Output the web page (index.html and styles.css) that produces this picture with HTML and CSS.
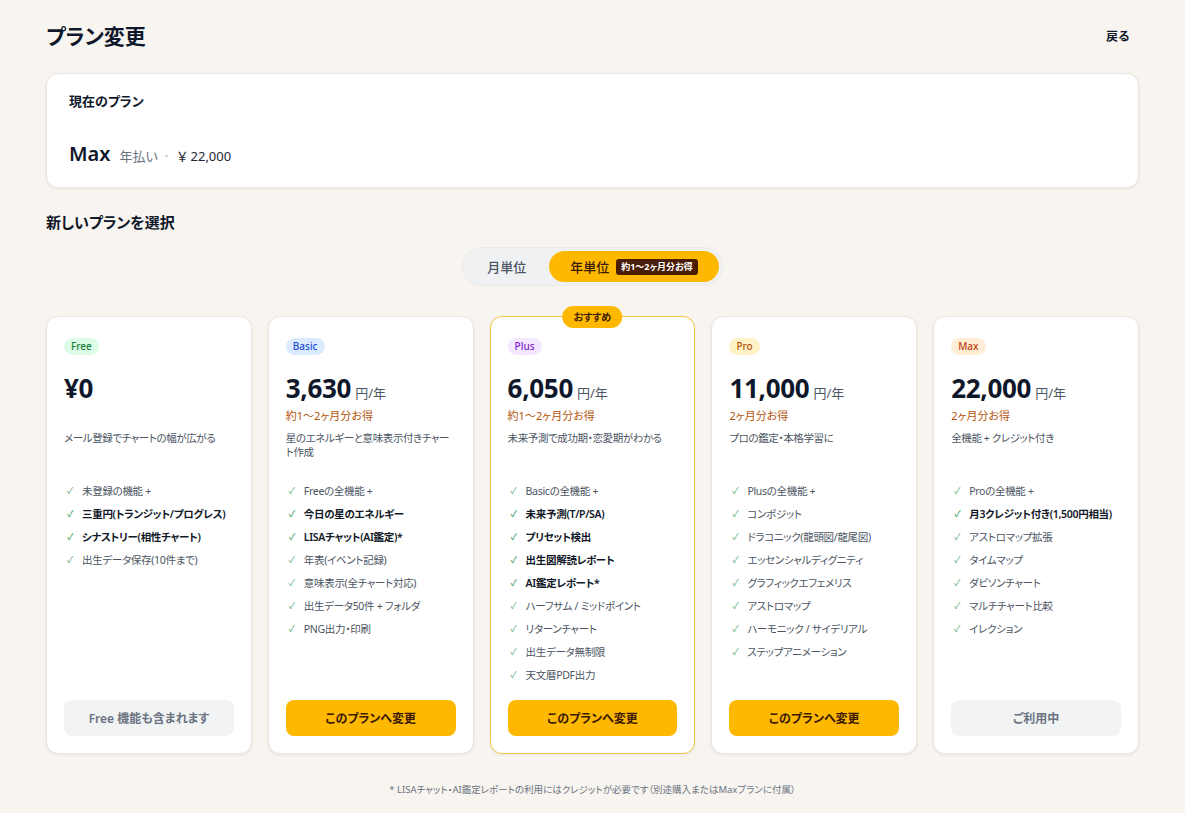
FILE: index.html
```html
<!DOCTYPE html>
<html lang="ja">
<head>
  <meta charset="UTF-8">
  <meta name="viewport" content="width=device-width, initial-scale=1.0">
  <title>プラン変更</title>
  <link rel="stylesheet" href="styles.css">
</head>
<body>
  <div class="container">
    <div class="page-header">
      <h1>プラン変更</h1>
      <button class="back-button">戻る</button>
    </div>

    <div class="current-card">
      <div class="current-label">現在のプラン</div>
      <div class="current-plan">
        <span class="current-name">Max</span>
        <span class="current-cycle">年払い</span>
        <span class="current-sep">·</span>
        <span class="current-price">￥ 22,000</span>
      </div>
    </div>

    <h2 class="section-title">新しいプランを選択</h2>

    <div class="toggle-row">
      <div class="toggle">
        <button class="toggle-option">月単位</button>
        <button class="toggle-option active">年単位 <span class="toggle-badge">約1〜2ヶ月分お得</span></button>
      </div>
    </div>

    <div class="plans-grid">
      <div class="plan-card">
        <span class="plan-tag tag-free">Free</span>
        <div class="plan-price"><span class="price-value">¥0</span></div>
        <div class="plan-save"></div>
        <div class="plan-desc">メール登録でチャートの幅が広がる</div>
        <ul class="feature-list">
          <li>未登録の機能 +</li>
          <li class="strong">三重円(トランジット/プログレス)</li>
          <li class="strong">シナストリー(相性チャート)</li>
          <li>出生データ保存(10件まで)</li>
        </ul>
        <button class="plan-button button-muted">Free 機能も含まれます</button>
      </div>

      <div class="plan-card">
        <span class="plan-tag tag-basic">Basic</span>
        <div class="plan-price"><span class="price-value">3,630</span><span class="price-unit">円/年</span></div>
        <div class="plan-save">約1〜2ヶ月分お得</div>
        <div class="plan-desc">星のエネルギーと意味表示付きチャート作成</div>
        <ul class="feature-list">
          <li>Freeの全機能 +</li>
          <li class="strong">今日の星のエネルギー</li>
          <li class="strong">LISAチャット(AI鑑定)*</li>
          <li>年表(イベント記録)</li>
          <li>意味表示(全チャート対応)</li>
          <li>出生データ50件 + フォルダ</li>
          <li>PNG出力・印刷</li>
        </ul>
        <button class="plan-button button-primary">このプランへ変更</button>
      </div>

      <div class="plan-card featured">
        <span class="featured-badge">おすすめ</span>
        <span class="plan-tag tag-plus">Plus</span>
        <div class="plan-price"><span class="price-value">6,050</span><span class="price-unit">円/年</span></div>
        <div class="plan-save">約1〜2ヶ月分お得</div>
        <div class="plan-desc">未来予測で成功期・恋愛期がわかる</div>
        <ul class="feature-list">
          <li>Basicの全機能 +</li>
          <li class="strong">未来予測(T/P/SA)</li>
          <li class="strong">プリセット検出</li>
          <li class="strong">出生図解読レポート</li>
          <li class="strong">AI鑑定レポート*</li>
          <li>ハーフサム / ミッドポイント</li>
          <li>リターンチャート</li>
          <li>出生データ無制限</li>
          <li>天文暦PDF出力</li>
        </ul>
        <button class="plan-button button-primary">このプランへ変更</button>
      </div>

      <div class="plan-card">
        <span class="plan-tag tag-pro">Pro</span>
        <div class="plan-price"><span class="price-value">11,000</span><span class="price-unit">円/年</span></div>
        <div class="plan-save">2ヶ月分お得</div>
        <div class="plan-desc">プロの鑑定・本格学習に</div>
        <ul class="feature-list">
          <li>Plusの全機能 +</li>
          <li>コンポジット</li>
          <li>ドラコニック(龍頭図/龍尾図)</li>
          <li>エッセンシャルディグニティ</li>
          <li>グラフィックエフェメリス</li>
          <li>アストロマップ</li>
          <li>ハーモニック / サイデリアル</li>
          <li>ステップアニメーション</li>
        </ul>
        <button class="plan-button button-primary">このプランへ変更</button>
      </div>

      <div class="plan-card">
        <span class="plan-tag tag-max">Max</span>
        <div class="plan-price"><span class="price-value">22,000</span><span class="price-unit">円/年</span></div>
        <div class="plan-save">2ヶ月分お得</div>
        <div class="plan-desc">全機能 + クレジット付き</div>
        <ul class="feature-list">
          <li>Proの全機能 +</li>
          <li class="strong">月3クレジット付き(1,500円相当)</li>
          <li>アストロマップ拡張</li>
          <li>タイムマップ</li>
          <li>ダビソンチャート</li>
          <li>マルチチャート比較</li>
          <li>イレクション</li>
        </ul>
        <button class="plan-button button-muted">ご利用中</button>
      </div>
    </div>

    <p class="footnote">* LISAチャット・AI鑑定レポートの利用にはクレジットが必要です（別途購入またはMaxプランに付属）</p>
  </div>
</body>
</html>
```

FILE: styles.css
```css
body {
  font-family: "Noto Sans", "Noto Sans CJK JP", sans-serif;
  font-feature-settings: "palt";
  margin: 0;
  padding: 0;
  background: #f8f5f0;
  color: #0f172a;
}

.container {
  padding: 22px 46px 0;
}

.page-header {
  display: flex;
  justify-content: space-between;
  align-items: center;
  height: 28px;
  margin-bottom: 23px;
}

.page-header h1 {
  margin: 0;
  font-size: 21px;
  font-weight: 700;
  line-height: 28px;
}

.back-button {
  background: none;
  border: none;
  font-family: inherit;
  font-size: 12px;
  font-weight: 600;
  color: #0f172a;
  padding: 4px 9px;
  cursor: pointer;
}

.current-card {
  background: #fff;
  border: 1px solid #ebe6df;
  border-radius: 12px;
  padding: 18px 22px 19px;
  box-shadow: 0 1px 3px rgba(0, 0, 0, 0.08);
}

.current-label {
  font-size: 13px;
  font-weight: 600;
  line-height: 18px;
  margin-bottom: 30px;
}

.current-plan {
  display: flex;
  align-items: baseline;
  gap: 7px;
  height: 28px;
}

.current-name {
  font-size: 20px;
  font-weight: 600;
  line-height: 28px;
  margin-right: 2px;
}

.current-cycle,
.current-sep,
.current-price {
  font-size: 13px;
  line-height: 18px;
}

.current-cycle {
  color: #6b7280;
}

.current-sep {
  color: #9ca3af;
  margin-right: 2px;
}

.current-price {
  color: #1f2937;
}

.section-title {
  margin: 23px 0 14px;
  font-size: 15px;
  font-weight: 700;
  line-height: 22px;
}

.toggle-row {
  display: flex;
  justify-content: center;
  margin-bottom: 30px;
}

.toggle {
  display: flex;
  gap: 2px;
  padding: 3px;
  background: #f0f1f3;
  border: 1px solid #ebebeb;
  border-radius: 20px;
}

.toggle-option {
  border: none;
  background: none;
  font-family: inherit;
  font-feature-settings: "palt";
  font-size: 13px;
  font-weight: 500;
  color: #4b5563;
  height: 31px;
  padding: 0 21px;
  border-radius: 16px;
  display: inline-flex;
  align-items: center;
  gap: 7px;
  cursor: pointer;
}

.toggle-option.active {
  background: #ffb800;
  color: #3b1a04;
}

.toggle-badge {
  background: #4a1d05;
  color: #fff;
  font-size: 9px;
  font-weight: 700;
  line-height: 16px;
  padding: 0 5px;
  border-radius: 3px;
}

.plans-grid {
  display: grid;
  grid-template-columns: repeat(5, 1fr);
  gap: 16px;
}

.plan-card {
  position: relative;
  display: flex;
  flex-direction: column;
  align-items: flex-start;
  background: #fff;
  border: 1px solid #ebe6df;
  border-radius: 12px;
  padding: 21px 17px 17px;
  height: 438px;
  box-sizing: border-box;
  box-shadow: 0 1px 3px rgba(0, 0, 0, 0.08);
}

.plan-card.featured {
  border-color: #f5c542;
}

.featured-badge {
  position: absolute;
  top: -11px;
  left: 50%;
  transform: translateX(-50%);
  background: #ffb800;
  color: #3b1a04;
  font-size: 10px;
  font-weight: 600;
  line-height: 22px;
  padding: 0 11px;
  border-radius: 11px;
}

.plan-tag {
  font-size: 10px;
  font-weight: 500;
  line-height: 17px;
  padding: 0 7px;
  border-radius: 9px;
}

.tag-free { background: #dcfce7; color: #15803d; }
.tag-basic { background: #dbeafe; color: #1d4ed8; }
.tag-plus { background: #f3e8ff; color: #7e22ce; }
.tag-pro { background: #fef3c7; color: #b45309; }
.tag-max { background: #ffedd5; color: #c2410c; }

.plan-price {
  margin-top: 16px;
  display: flex;
  align-items: baseline;
  gap: 4px;
  height: 34px;
}

.price-value {
  font-size: 26px;
  font-weight: 700;
  line-height: 34px;
  letter-spacing: -0.3px;
}

.price-unit {
  font-size: 13px;
  line-height: 16px;
  color: #4b5563;
}

.plan-save {
  margin-top: 3px;
  height: 16px;
  font-size: 11px;
  line-height: 16px;
  color: #b45309;
}

.plan-desc {
  margin-top: 7px;
  min-height: 30px;
  font-size: 10.5px;
  line-height: 14px;
  letter-spacing: -0.4px;
  color: #4b5563;
}

.feature-list {
  list-style: none;
  margin: 22px 0 0;
  padding: 0;
  display: flex;
  flex-direction: column;
  gap: 7px;
}

.feature-list li {
  font-size: 10.5px;
  line-height: 16px;
  letter-spacing: -0.3px;
  color: #4b5563;
  white-space: nowrap;
  display: flex;
  align-items: center;
}

.feature-list li::before {
  content: "✓";
  width: 15px;
  flex-shrink: 0;
  padding-left: 3px;
  font-size: 9px;
  color: #5fae7d;
}

.feature-list li.strong {
  font-weight: 600;
  color: #111827;
}

.plan-button {
  margin-top: auto;
  width: 100%;
  height: 36px;
  border: none;
  border-radius: 8px;
  font-family: inherit;
  font-feature-settings: "palt";
  font-size: 12px;
  font-weight: 600;
  cursor: pointer;
}

.button-primary {
  background: #ffb800;
  color: #3b1a04;
}

.button-muted {
  background: #f1f3f5;
  color: #6b7280;
}

.footnote {
  margin: 29px 0 0;
  text-align: center;
  font-size: 9.5px;
  line-height: 14px;
  color: #6b7280;
}
```
